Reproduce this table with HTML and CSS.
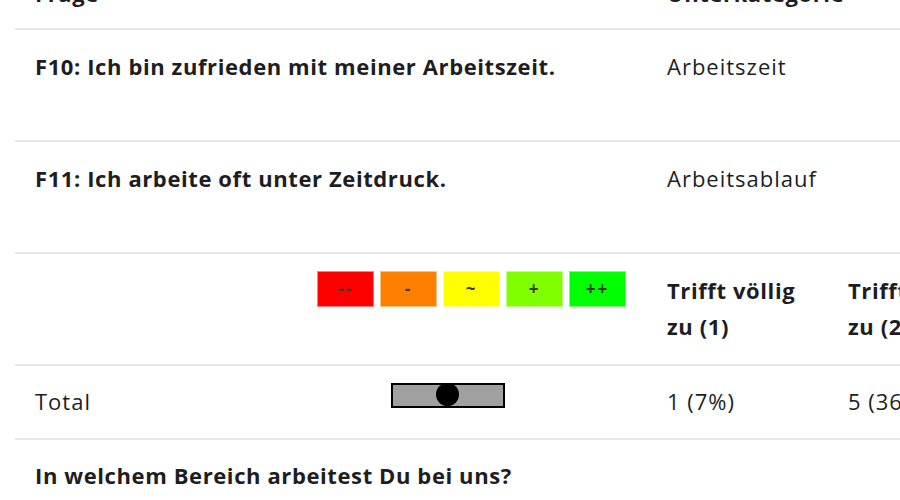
FILE: index.html
```html
<!DOCTYPE html>
<html lang="de">
<head>
<meta charset="utf-8">
<link rel="stylesheet" href="styles.css">
</head>
<body>
<div class="table">
  <div class="row head">
    <div class="cell bold">Frage</div>
    <div class="cell bold">Unterkategorie</div>
    <div class="cell"></div>
  </div>
  <div class="row q">
    <div class="cell bold">F10: Ich bin zufrieden mit meiner Arbeitszeit.</div>
    <div class="cell">Arbeitszeit</div>
    <div class="cell"></div>
  </div>
  <div class="row q">
    <div class="cell bold">F11: Ich arbeite oft unter Zeitdruck.</div>
    <div class="cell">Arbeitsablauf</div>
    <div class="cell"></div>
  </div>
  <div class="row legend">
    <div class="cell scale">
      <span class="box c1">--</span>
      <span class="box c2">-</span>
      <span class="box c3">~</span>
      <span class="box c4">+</span>
      <span class="box c5">++</span>
    </div>
    <div class="cell bold">Trifft völlig<br>zu (1)</div>
    <div class="cell bold">Trifft eher<br>zu (2)</div>
  </div>
  <div class="row total">
    <div class="cell totalcell">
      <span class="label">Total</span>
      <span class="slider"><span class="dot"></span></span>
    </div>
    <div class="cell">1 (7%)</div>
    <div class="cell">5 (36%)</div>
  </div>
  <div class="row last">
    <div class="cell bold">In welchem Bereich arbeitest Du bei uns?</div>
  </div>
</div>
</body>
</html>
```

FILE: styles.css
```css
html, body {
  margin: 0;
  padding: 0;
  background: #fff;
  overflow: hidden;
}
body {
  font-family: "Open Sans", "Noto Sans", sans-serif;
  font-size: 22px;
  line-height: 36px;
  letter-spacing: 1px;
  color: #1e1e22;
}
.table {
  margin-top: -42px;
  margin-left: 15px;
  width: 1100px;
}
.row {
  display: grid;
  grid-template-columns: 632px 181px 260px;
  border-bottom: 2px solid #e6e7ea;
  box-sizing: border-box;
}
.cell {
  padding: 17px 20px;
  white-space: nowrap;
}
.bold {
  font-weight: 700;
  letter-spacing: 0.6px;
}
.head { height: 72px; }
.q { height: 112px; }
.q .cell { padding-top: 18px; }
.legend { height: 112px; }
.legend .cell { padding-top: 18px; }
.scale {
  display: flex;
  justify-content: flex-end;
  gap: 6px;
  padding-top: 17px !important;
  padding-right: 21px !important;
}
.box {
  width: 57px;
  height: 36px;
  box-sizing: border-box;
  border: 1px solid rgba(255,255,255,0.5);
  display: flex;
  align-items: center;
  justify-content: center;
  font-size: 17px;
  font-weight: 700;
  color: #3a3a3a;
  letter-spacing: 2px;
}
.c1 { background: #ff0000; }
.c2 { background: #ff8000; }
.c3 { background: #ffff00; }
.c4 { background: #80ff00; }
.c5 { background: #00ff00; }
.total { height: 74px; }
.totalcell {
  display: flex;
  align-items: flex-start;
}
.label { width: 356px; }
.slider {
  position: relative;
  margin-top: 0;
  width: 114px;
  height: 25px;
  box-sizing: border-box;
  border: 2px solid #000;
  background: #a0a0a0;
}
.dot {
  position: absolute;
  left: 43px;
  top: -2px;
  width: 23px;
  height: 23px;
  border-radius: 50%;
  background: #000;
}
.last { border-bottom: none; display: block; }
```
